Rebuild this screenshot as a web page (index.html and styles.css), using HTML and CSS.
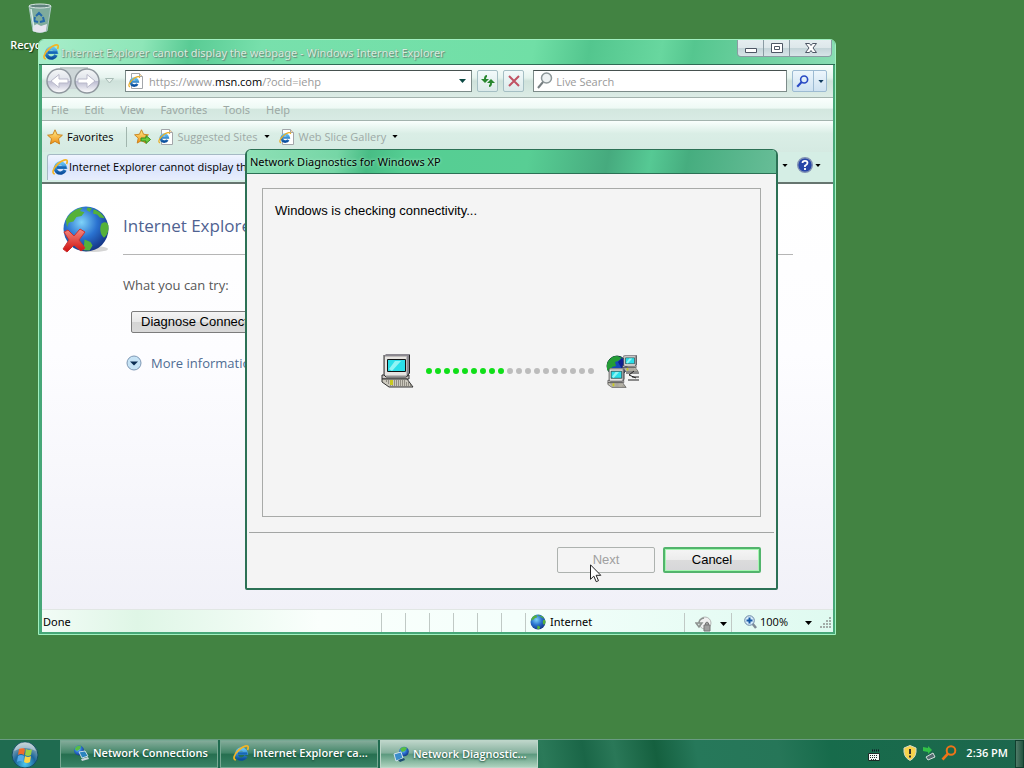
FILE: index.html
```html
<!DOCTYPE html>
<html lang="en">
<head>
    <meta charset="UTF-8">
    <meta name="viewport" content="width=device-width, initial-scale=1.0">
    <title>Network Diagnostics for Windows XP</title>
    <link rel="stylesheet" href="styles.css">
</head>
<body>
    <!-- shared icons -->
    <svg class="sprite" aria-hidden="true">
        <defs>
            <linearGradient id="ieBlue" x1="0" y1="0" x2="0" y2="1">
                <stop offset="0" stop-color="#62c0f4"/>
                <stop offset="1" stop-color="#0b4f9e"/>
            </linearGradient>
            <linearGradient id="gold" x1="0" y1="0" x2="0" y2="1">
                <stop offset="0" stop-color="#fff08a"/>
                <stop offset="1" stop-color="#f08c12"/>
            </linearGradient>
            <radialGradient id="sea" cx=".4" cy=".35" r=".7">
                <stop offset="0" stop-color="#7fd3f8"/>
                <stop offset=".5" stop-color="#2a72d0"/>
                <stop offset="1" stop-color="#12307f"/>
            </radialGradient>
            <linearGradient id="redX" x1="0" y1="0" x2="0" y2="1">
                <stop offset="0" stop-color="#f58a80"/>
                <stop offset="1" stop-color="#d00f0f"/>
            </linearGradient>
            <linearGradient id="silver" x1="0" y1="0" x2="0" y2="1">
                <stop offset="0" stop-color="#f4f6f7"/>
                <stop offset=".48" stop-color="#dfe3ea"/>
                <stop offset=".5" stop-color="#b9b9cf"/>
                <stop offset="1" stop-color="#ffffff"/>
            </linearGradient>
            <radialGradient id="orb" cx=".5" cy=".85" r=".8">
                <stop offset="0" stop-color="#4cc8ee"/>
                <stop offset=".5" stop-color="#1c669c"/>
                <stop offset="1" stop-color="#9cb4bb"/>
            </radialGradient>
        </defs>
        <symbol id="ie" viewBox="0 0 16 16">
            <path d="M13 11A5 5 0 1 1 13.300 8.300H5" fill="none" stroke="url(#ieBlue)" stroke-width="3.400"/>
            <path d="M5 8.500h9" stroke="#1767b5" stroke-width="2.200"/>
            <path d="M2.800 14.800C-.8 14.500 1.500 8.800 5.800 5 10 1.200 15.400-.8 15.200 2.600c0 .8-.3 1.600-.7 2.400" fill="none" stroke="#f3b526" stroke-width="1.700"/>
        </symbol>
        <symbol id="iePage" viewBox="0 0 16 16">
            <path d="M3.500.5h8l3 3v12h-11z" fill="#fff" stroke="#a3a6aa"/>
            <path d="M11.500.5v3h3" fill="#f7d9a8" stroke="#a3a6aa"/>
            <path d="M9.300 10.800A3.500 3.500 0 1 1 9.700 8.500H4" fill="none" stroke="url(#ieBlue)" stroke-width="2.600"/>
            <path d="M2 13.800C-.8 13 2 8.500 5.500 5.800 8.500 3.400 12 2.800 11.500 5" fill="none" stroke="#e9ad25" stroke-width="1.200"/>
        </symbol>
        <symbol id="star" viewBox="0 0 16 16">
            <path d="M8 .8l2.200 4.800 5.200.6-3.900 3.500 1.100 5.300L8 12.400 3.400 15l1.100-5.300L.6 6.200l5.200-.6z" fill="url(#gold)" stroke="#c77d14" stroke-width=".9"/>
        </symbol>
        <symbol id="globe" viewBox="0 0 16 16">
            <circle cx="8" cy="8" r="7.500" fill="url(#sea)"/>
            <path d="M1.300 5C2.500 2.500 5 1 7 .8L6 2l1.500.4-1 1.300-1.700.3-1 1.500-1.500.3-.6 1.500zM8.500.8l1.500.3-.8 1.200-1-.6zM10.500 1.400c2 .6 3.200 1.900 3.700 3l-1.600-.2-.9-1-1.300-.3zM13.200 6.200c1.200-.8 2-.4 2.300.7.100 2-.5 3.200-1.500 4-1.300-1-1.600-3.200-.8-4.700zM7.500 11.500l2 .8.700 1.200-1 1.700-2-.1z" fill="#55b13a"/>
        </symbol>
        <symbol id="caret" viewBox="0 0 7 4">
            <path d="M0 0h7L3.500 4z" fill="currentColor"/>
        </symbol>
        <symbol id="lens" viewBox="0 0 16 16">
            <circle cx="10" cy="5.500" r="4.300" fill="none" stroke="currentColor" stroke-width="2"/>
            <path d="M7 8.700L1.500 14.500" stroke="currentColor" stroke-width="2.600"/>
        </symbol>
        <symbol id="screen" viewBox="0 0 33 34">
            <path d="M3 2l2-2h24v19l-3 3H3z" fill="#8b8890"/>
            <path d="M28.500 1v18l-2.500 3" fill="none" stroke="#222"/>
            <path d="M3.500 2.500h22v19h-22z" fill="#e6e4e1" stroke="#bdbab9"/>
            <path d="M3 1v21" stroke="#333"/>
            <path d="M6.500 5.500h18v12h-18z" fill="#2adfe9" stroke="#111"/>
            <path d="M8 15l6-8h6l-9 10z" fill="#90f5f5"/>
            <path d="M1 21h2l2 2h20l3-2v4H1z" fill="#c9c6c4" stroke="#333"/>
            <path d="M1 25h25l6 8H8l-7-5z" fill="#cbc8bd" stroke="#333"/>
            <path d="M5 27h20M7 29h21M9 31h21" stroke="#56534a" stroke-dasharray="1 1"/>
            <path d="M9 26h3v5H9z" fill="#c9c920"/>
        </symbol>
        <symbol id="net" viewBox="0 0 16 16">
            <circle cx="6" cy="5.500" r="5" fill="url(#sea)"/>
            <path d="M1.500 4Q4-.5 8 1L7 4 4 6z" fill="#57bd42"/>
            <path d="M6 7l6-1 3 5-6 2z" fill="#2b83be" stroke="#c6dce8"/>
            <path d="M8 14l7-2 1 2-7 2z" fill="#cbd5dc"/>
        </symbol>
        <symbol id="diag" viewBox="0 0 16 16">
            <circle cx="11" cy="5.500" r="4.800" fill="url(#sea)"/>
            <path d="M7 3Q10-.5 14 2l-2 3-3 1z" fill="#57bd42"/>
            <path d="M1 8l7-2 2 6-7 3z" fill="#3c8dcb" stroke="#d2e4ef"/>
            <path d="M5 14l6-2 1 2-5 2z" fill="#1d4e74"/>
        </symbol>
    </svg>

    <main class="desktop">
        <div class="shortcut">
            <svg width="28" height="32" viewBox="0 0 28 32" aria-hidden="true">
                <path d="M3 4h22l-4 25q-7 3-14 0z" fill="#8fb5b3" fill-opacity=".8" stroke="#a9c6c2"/>
                <ellipse cx="14" cy="4" rx="11" ry="2" fill="#60837e" stroke="#dce9e6"/>
                <path d="M7 24l4-2 4 2 6-2-1 7q-6 3-13 0z" fill="#e6e4ee"/>
                <path d="M10 14l3-3 3 3M17 15l1 4-4 1M9 15l-1 4 4 1" fill="none" stroke="#2468aa" stroke-width="2"/>
                <path d="M5 7l3 19" stroke="#d9ece8" stroke-width="1.500"/>
            </svg>
            <span>Recycle Bin</span>
        </div>

        <section class="window browser">
            <header class="titlebar">
                <svg class="icon"><use href="#ie"/></svg>
                <h1 class="title">Internet Explorer cannot display the webpage - Windows Internet Explorer</h1>
                <div class="caption-buttons">
                    <button type="button" aria-label="Minimize">
                        <svg width="14" height="12" viewBox="0 0 14 12"><path d="M1.500 6.500h11v4h-11z" fill="#fff" stroke="#4d5664"/></svg>
                    </button>
                    <button type="button" aria-label="Maximize">
                        <svg width="14" height="12" viewBox="0 0 14 12"><path d="M1.500 1.500h11v9h-11zM4.500 4.500h5v3h-5z" fill="#fff" stroke="#4d5664"/></svg>
                    </button>
                    <button type="button" class="close" aria-label="Close">
                        <svg width="14" height="12" viewBox="0 0 14 12"><path d="M1.500 1.500h4L7 3.500l1.500-2h4L9 6l3.500 4.500h-4L7 8.500l-1.500 2h-4L5 6z" fill="#fff" stroke="#4d5664"/></svg>
                    </button>
                </div>
            </header>

            <div class="address-row">
                <button type="button" class="plain" aria-label="Back and forward">
                    <svg width="64" height="28" viewBox="0 0 64 28">
                        <path d="M14 2h28v20H14z" fill="#cdd6d8"/>
                        <path d="M14 1h28" stroke="#91a09f"/>
                        <circle cx="13" cy="14" r="12" fill="url(#silver)" stroke="#8f979e" stroke-width="1.500"/>
                        <circle cx="41" cy="14" r="12" fill="url(#silver)" stroke="#8f979e" stroke-width="1.500"/>
                        <path d="M5 14l8-6.500V12h9v4h-9v4.500z" fill="#fff" stroke="#b9b9ca"/>
                        <path d="M49 14l-8-6.500V12h-9v4h9v4.500z" fill="#fff" stroke="#b9b9ca"/>
                    </svg>
                </button>
                <svg class="history" width="9" height="6" viewBox="0 0 9 6"><path d="M.5.5h8l-4 4.500z" fill="#e8f2ee" stroke="#a8bcb6"/></svg>
                <div class="field address">
                    <svg class="icon"><use href="#iePage"/></svg>
                    <a href="#">https://www.<b>msn.com</b>/?ocid=iehp</a>
                    <svg class="caret teal"><use href="#caret"/></svg>
                </div>
                <button type="button" class="tool" aria-label="Refresh">
                    <svg width="16" height="16" viewBox="0 0 16 16"><path d="M7 2Q4 2 4 6H1l4 4 4-4H6Q6 4 7 4zM9 14q3 0 3-4h3l-4-4-4 4h3q0 2-1 2z" fill="#28872f"/></svg>
                </button>
                <button type="button" class="tool" aria-label="Stop">
                    <svg width="16" height="16" viewBox="0 0 16 16"><path d="M3 3l10 10M13 3L3 13" stroke="#c05364" stroke-width="2"/></svg>
                </button>
                <label class="field search">
                    <svg width="16" height="18" viewBox="0 0 16 18"><circle cx="9.500" cy="6" r="5" fill="#eef2f3" stroke="#8d9799" stroke-width="1.500"/><path d="M6 10l-5 6" stroke="#777f82" stroke-width="2"/></svg>
                    <input type="text" placeholder="Live Search" aria-label="Live Search">
                </label>
                <button type="button" class="tool search-go" aria-label="Search">
                    <svg class="blue" width="13" height="13"><use href="#lens"/></svg>
                    <i></i>
                    <svg class="caret small"><use href="#caret"/></svg>
                </button>
            </div>

            <nav class="menu-row">
                <button type="button">File</button>
                <button type="button">Edit</button>
                <button type="button">View</button>
                <button type="button">Favorites</button>
                <button type="button">Tools</button>
                <button type="button">Help</button>
            </nav>

            <div class="favorites-row">
                <button type="button" class="plain fav"><svg class="icon"><use href="#star"/></svg>Favorites</button>
                <i class="divider"></i>
                <button type="button" class="plain" aria-label="Add to Favorites Bar">
                    <svg width="17" height="16" viewBox="0 0 17 16"><use href="#star" width="15" height="15"/><path d="M7 9h5V6.500l4.500 4-4.500 4V12H7z" fill="#6cce3d" stroke="#368d20"/></svg>
                </button>
                <button type="button" class="plain dim"><svg class="icon"><use href="#iePage"/></svg>Suggested Sites<svg class="caret small"><use href="#caret"/></svg></button>
                <button type="button" class="plain dim"><svg class="icon"><use href="#iePage"/></svg>Web Slice Gallery<svg class="caret small"><use href="#caret"/></svg></button>
            </div>

            <div class="tab-row">
                <button type="button" class="tab"><svg class="icon"><use href="#ie"/></svg>Internet Explorer cannot display the webpage</button>
                <div class="commands">
                    <svg class="caret small"><use href="#caret"/></svg>
                    <button type="button" class="plain" aria-label="Help">
                        <svg width="16" height="16" viewBox="0 0 16 16"><circle cx="8" cy="8" r="7.300" fill="#2746a8" stroke="#8393b5" stroke-width="1.400"/><path d="M5.500 6Q5.500 3.800 8 3.800T10.500 6Q10.500 7.300 8 8.800V10M8 11v2" fill="none" stroke="#fff" stroke-width="1.800"/></svg>
                        <svg class="caret small"><use href="#caret"/></svg>
                    </button>
                </div>
            </div>

            <article class="page">
                <svg class="error-globe" width="48" height="48" viewBox="0 0 48 48" aria-hidden="true">
                    <ellipse cx="32" cy="44" rx="14" ry="3" fill="#d5d5d5"/>
                    <use href="#globe" width="48" height="48"/>
                    <path d="M2 27l4-2 6 6 6-7 5 3-6 8 6 8-4 3-7-6-7 7-4-3 6-9z" fill="url(#redX)" stroke="#c93333"/>
                </svg>
                <div class="page-text">
                    <h2>Internet Explorer cannot display the webpage</h2>
                    <p>What you can try:</p>
                    <button type="button" class="diagnose">Diagnose Connection Problems</button>
                    <a class="more" href="#">
                        <svg width="16" height="16" viewBox="0 0 16 16"><circle cx="8" cy="8" r="7" fill="#c6e3f5" stroke="#7e98b4"/><path d="M4 6.500h8L8 10.500z" fill="#0a2c52"/></svg>
                        More information
                    </a>
                </div>
            </article>

            <footer class="statusbar">
                <span class="done">Done</span>
                <i></i><i></i><i></i><i></i><i></i><i></i>
                <span class="zone"><svg class="icon"><use href="#globe"/></svg>Internet</span>
                <span class="lock">
                    <svg width="17" height="16" viewBox="0 0 17 16"><circle cx="10" cy="7" r="6" fill="#f0f0f0" stroke="#b4b8b6"/><path d="M1 7h6L4 11zM4 7q0-4 5-5" fill="none" stroke="#8d9290" stroke-width="1.500"/><path d="M9 9h6v6H9zM10.500 9V7q1.500-2 3 0v2" fill="#a0a0a0" stroke="#777"/></svg>
                    <svg class="caret"><use href="#caret"/></svg>
                </span>
                <span class="zoom">
                    <svg width="13" height="14" viewBox="0 0 13 14"><path d="M8 8l4 5" stroke="#7e8b96" stroke-width="2.500"/><circle cx="5.500" cy="5.500" r="4.800" fill="#d7ecfa" stroke="#6a86a5"/><path d="M5.500 2.500v6M2.500 5.500h6" stroke="#1658a5" stroke-width="2"/></svg>
                    100%
                    <svg class="caret"><use href="#caret"/></svg>
                </span>
                <svg class="grip" width="12" height="12" viewBox="0 0 12 12"><path d="M9 1h2M6 4h2m1 0h2M3 7h2m1 0h2m1 0h2M0 10h2m1 0h2m1 0h2m1 0h2" stroke="#a3aca8" stroke-width="2"/></svg>
            </footer>
        </section>

        <section class="window dialog" role="dialog" aria-labelledby="dialogTitle">
            <header class="titlebar">
                <h1 class="title" id="dialogTitle">Network Diagnostics for Windows XP</h1>
            </header>
            <div class="dialog-body">
                <div class="panel">
                    <p>Windows is checking connectivity...</p>
                    <div class="progress">
                        <svg width="33" height="34" aria-hidden="true"><use href="#screen"/></svg>
                        <svg class="dots" width="168" height="6" viewBox="0 0 168 6" aria-hidden="true">
                            <path d="M3 3h73" stroke="#0fdf18"/>
                            <path d="M84 3h82" stroke="#bcbcbc"/>
                        </svg>
                        <svg width="33" height="34" viewBox="0 0 33 34" aria-hidden="true">
                            <circle cx="11" cy="12" r="10" fill="#1747bb" stroke="#163f35"/>
                            <path d="M1 10Q4 2 11 2l5 2-4 3-3 1 1 4-4 1-1 5-4-2z" fill="#249d36"/>
                            <path d="M12 8l4-4 3 5-3 6z" fill="#101f8e"/>
                            <use href="#screen" x="16" y="1" width="17" height="17"/>
                            <use href="#screen" x="1" y="14" width="20" height="20"/>
                            <path d="M20 19h13M26 23h7M22 26h11M28 17l-5 4 7 3" fill="none" stroke="#222"/>
                        </svg>
                    </div>
                </div>
                <div class="actions">
                    <button type="button" disabled>Next</button>
                    <button type="button" class="default">Cancel</button>
                </div>
            </div>
        </section>

        <svg class="cursor" width="12" height="19" viewBox="0 0 12 19" aria-hidden="true"><path d="M.5.8v14.500l3.300-3.200 2.400 5.600 2.300-1-2.400-5.400h4.700z" fill="#fff" stroke="#222"/></svg>
    </main>

    <footer class="taskbar">
        <button type="button" class="start" aria-label="Start">
            <svg width="28" height="28" viewBox="0 0 28 28">
                <circle cx="14" cy="15" r="13" fill="url(#orb)" stroke="#154f60"/>
                <path d="M8 9q3-2 6 0l-1 6q-3-2-6 0z" fill="#ee6c2c"/>
                <path d="M15 9q3 2 6 0l-1 6q-3 2-6 0z" fill="#9bcf43"/>
                <path d="M7 16q3-2 6 0l-1 6q-3-2-6 0z" fill="#55aae9"/>
                <path d="M14 16q3 2 6 0l-1 6q-3 2-6 0z" fill="#fbd448"/>
                <path d="M3 11q3-9 11-9t11 9q-11-6-22 0z" fill="#fff" fill-opacity=".4"/>
            </svg>
        </button>
        <button type="button" class="task"><svg class="icon"><use href="#net"/></svg>Network Connections</button>
        <button type="button" class="task"><svg class="icon"><use href="#ie"/></svg>Internet Explorer ca...</button>
        <button type="button" class="task active"><svg class="icon"><use href="#diag"/></svg>Network Diagnostic...</button>
        <div class="tray">
            <svg class="keyboard" width="12" height="12" viewBox="0 0 12 12"><path d="M4 1.500h7" stroke="#112" stroke-width="2" stroke-dasharray="1 1"/><path d="M.5 4.500h11v7H.5z" fill="#f4f7f5" stroke="#1c2b26"/><path d="M2 6.500h8M2 8.500h8M3 10.500h6" stroke="#1c2b26" stroke-dasharray="1 1"/></svg>
            <svg width="14" height="16" viewBox="0 0 14 16"><path d="M7 .5l6 2.500q1 9-6 12.500Q0 12 1 3z" fill="#f7d34c" stroke="#d9dcc6"/><path d="M7 4v5M7 10.500v2" stroke="#333" stroke-width="2"/></svg>
            <svg width="14" height="16" viewBox="0 0 14 16"><path d="M1 2l5 1V1l4 4-4 4V7L1 6z" fill="#32c148"/><path d="M4 12l7-4 2 4-7 3z" fill="#546b70" stroke="#d5dfdd"/></svg>
            <svg class="orange" width="16" height="16"><use href="#lens"/></svg>
            <time>2:36 PM</time>
        </div>
        <button type="button" class="show-desktop" aria-label="Show desktop"></button>
    </footer>
</body>
</html>
```

FILE: styles.css
```css
* {
    box-sizing: border-box;
}
body {
    margin: 0;
    height: 100vh;
    display: flex;
    flex-direction: column;
    overflow: hidden;
    background: #428342;
    color: #000;
    font: 11px/16px "Open Sans", "Noto Sans", sans-serif;
}
button, input {
    font: inherit;
    color: inherit;
    margin: 0;
}
h1, h2, p {
    margin: 0;
    font-weight: normal;
}
svg {
    flex: none;
    display: block;
}
.sprite {
    position: absolute;
    width: 0;
    height: 0;
}
.icon {
    width: 16px;
    height: 16px;
}
.caret {
    width: 7px;
    height: 4px;
}
.caret.small {
    width: 6px;
    height: 3px;
}
.teal {
    color: #0c4944;
}
.blue {
    color: #2949c4;
}
.orange {
    color: #ef7418;
}
.plain {
    display: flex;
    align-items: center;
    padding: 0;
    border: 0;
    background: none;
}

/* desktop */
.desktop {
    position: relative;
    flex: 1;
}
.shortcut {
    width: 80px;
    padding-top: 2px;
    display: flex;
    flex-direction: column;
    align-items: center;
    gap: 3px;
    color: #fff;
    font-weight: 600;
    text-shadow: 1px 1px 1px #143814;
}
.window {
    position: absolute;
    display: flex;
    flex-direction: column;
}
.titlebar {
    display: flex;
    align-items: center;
}
.title {
    flex: 1;
    font: 11px/16px "Noto Sans", sans-serif;
    white-space: nowrap;
}

/* browser */
.browser {
    inset: 39px 188px 104px 38px;
    padding: 0 2px 2px 3px;
    border: 1px solid #a0f0bf;
    border-radius: 6px 6px 0 0;
    background: #47a778;
}
.browser .titlebar {
    height: 25px;
    margin: 0 -2px 0 -3px;
    padding: 0 3px 0 4px;
    gap: 2px;
    border-bottom: 1px solid #2e6b54;
    border-radius: 5px 5px 0 0;
    background: linear-gradient(100deg, #a8edca 0, #8ee6b8 13%, #59cb94 19%, #78e0ac 28%, #70dfa6 62%, #53c68e 69%, #68d79f 78%, #55c68f 82%, #89ddb3 100%);
}
.browser .title {
    padding-top: 2px;
    color: #d5efdf;
    text-shadow: 1px 1px 1px #69877a, 0 0 1px #789687;
}
.caption-buttons {
    display: flex;
    align-self: flex-start;
    height: 17px;
    border: 1px solid #8a9ca3;
    border-top: 0;
    border-radius: 0 0 4px 4px;
    overflow: hidden;
}
.caption-buttons button {
    width: 26px;
    padding: 2px 0 0;
    display: flex;
    justify-content: center;
    border: 0;
    border-right: 1px solid #8a9ca3;
    background: linear-gradient(#e5eef0 0, #dde7ea 50%, #c3d4d8 50%, #d8e5e8);
}
.caption-buttons .close {
    width: 41px;
    border-right: 0;
}
.address-row {
    height: 33px;
    padding: 0 6px 0 4px;
    display: flex;
    align-items: center;
    gap: 5px;
    border-bottom: 1px solid #a3b3ae;
    background: linear-gradient(#fafffd 0, #e5f3ee 40%, #cfe2db 50%, #dcece6 100%);
}
.address-row .history {
    margin: 0 6px 0 -10px;
}
.field {
    height: 22px;
    display: flex;
    align-items: center;
    border: 1px solid #7d8c8a;
    border-top-color: #46514f;
    background: #fff;
}
.address {
    flex: 347;
    padding: 0 5px 0 2px;
    gap: 5px;
}
.address a {
    flex: 1;
    padding-top: 2px;
    color: #999;
    text-decoration: none;
}
.address b {
    color: #000;
    font-weight: normal;
}
.search {
    flex: 255;
    margin-left: 4px;
    padding-left: 3px;
    gap: 3px;
}
.search input {
    flex: 1;
    min-width: 0;
    padding: 2px 0 0;
    border: 0;
    outline: 0;
    background: none;
}
.search input::placeholder {
    color: #999;
}
.tool {
    height: 22px;
    width: 21px;
    padding: 0;
    display: flex;
    align-items: center;
    justify-content: center;
    border: 1px solid #a5bfc4;
    border-radius: 2px;
    background: linear-gradient(#f2fafa, #dbeaea);
}
.search-go {
    width: 35px;
    gap: 4px;
    border-color: #9dbbd2;
    background: linear-gradient(#edf6fc, #cfe2f1);
    color: #123c5e;
}
.search-go i {
    align-self: stretch;
    border-left: 1px solid #9dbbd2;
}
.menu-row {
    height: 23px;
    padding-left: 9px;
    display: flex;
    align-items: center;
    gap: 16px;
    border-bottom: 1px solid #a3b3ae;
    background: linear-gradient(#fafffd 0, #eefaf5 45%, #d3e7df 52%, #d8ebe4 100%);
}
.menu-row button {
    padding: 2px 0 0;
    border: 0;
    background: none;
    color: #9da9a5;
    font-family: "Noto Sans", sans-serif;
}
.favorites-row {
    height: 31px;
    padding: 0 5px;
    display: flex;
    align-items: center;
    gap: 7px;
    background: linear-gradient(#fafffd 0, #daeee6 40%, #d5eae2 100%);
}
.fav {
    gap: 4px;
    margin-right: 5px;
}
.divider {
    height: 20px;
    border-left: 1px solid #a1b6ae;
}
.dim {
    gap: 4px;
    margin-right: 2px;
    color: #9da9a5;
}
.dim .caret {
    margin-left: 2px;
    color: #000;
}
.tab-row {
    height: 32px;
    padding: 2px 12px 2px 5px;
    display: flex;
    justify-content: space-between;
    border-bottom: 2px solid #66756f;
    background: #d5eee5;
}
.tab {
    padding: 0 12px 2px 4px;
    display: flex;
    align-items: center;
    gap: 1px;
    border: 1px solid #a5b9c4;
    border-bottom: 0;
    border-radius: 3px 3px 0 0;
    background: linear-gradient(#f0f5ff, #d9e3fc 50%, #e8eefd);
}
.commands, .commands button {
    display: flex;
    align-items: center;
    gap: 2px;
}
.commands {
    gap: 9px;
    padding-bottom: 4px;
}
.page {
    flex: 1;
    min-height: 0;
    padding: 21px 40px 0 20px;
    display: flex;
    gap: 13px;
    background: linear-gradient(#fff 0, #fdfdff 40%, #f1f1f8 100%);
    font-size: 13px;
    line-height: 20px;
    color: #575757;
}
.page-text {
    flex: 1;
    min-width: 0;
    display: flex;
    flex-direction: column;
    align-items: flex-start;
}
.page h2 {
    align-self: stretch;
    height: 50px;
    padding-top: 9px;
    border-bottom: 1px solid #b5b5b5;
    color: #4f6291;
    font-size: 17px;
    line-height: 24px;
}
.page p {
    margin-top: 20px;
}
.diagnose {
    height: 22px;
    margin: 16px 8px 0;
    padding: 0 9px;
    border: 1px solid #7c7c7c;
    border-radius: 2px;
    background: linear-gradient(#f4f4f4, #e7e7e7 50%, #d4d4d4 50%, #d9d9d9);
    color: #000;
    font: 13px/20px "Liberation Sans", Arial, sans-serif;
}
.more {
    margin: 20px 3px 0;
    display: flex;
    align-items: center;
    gap: 9px;
    color: #4f6c93;
    text-decoration: none;
}
.statusbar {
    height: 23px;
    padding-top: 2px;
    display: flex;
    align-items: center;
    background: linear-gradient(90deg, #f2fcf6, #dff6e6 12%, #fafffc 35%, #f4fffb 60%, #dffaf0);
    border-top: 1px solid #e1e7e4;
}
.statusbar i, .zone, .lock, .zoom {
    height: 19px;
    border-left: 1px solid #c0c9c5;
}
.statusbar i {
    width: 24px;
}
.done {
    flex: 1;
    padding-left: 1px;
    font-family: "Noto Sans", sans-serif;
}
.zone, .lock, .zoom {
    display: flex;
    align-items: center;
}
.zone {
    width: 159px;
    padding-left: 4px;
    gap: 4px;
    font-family: "Noto Sans", sans-serif;
}
.lock {
    width: 47px;
    padding: 3px 0 0 10px;
    gap: 8px;
}
.zoom {
    padding-left: 12px;
    gap: 3px;
}
.zoom .caret {
    margin: 2px 8px 0 14px;
}
.grip {
    margin: 2px 1px 0 0;
}

/* dialog */
.dialog {
    inset: 149px 246px 149px;
    margin-left: -1px;
    border: 2px solid #2c7155;
    border-top-width: 1px;
    border-radius: 6px 6px 2px 2px;
    background: #f4f4f4;
}
.dialog .titlebar {
    height: 24px;
    padding-left: 3px;
    border-bottom: 1px solid #2c7155;
    border-radius: 4px 4px 0 0;
    background: linear-gradient(100deg, #8ee0b6 0, #76d6a6 17%, #48bd85 23%, #55ce93 30%, #58ce94 53%, #46aa7e 68%, #56c994 76%, #46ad7f 83%, #67bd97 100%);
}
.dialog .title {
    text-shadow: 0 0 3px #c2f3d9;
}
.dialog-body {
    flex: 1;
    display: flex;
    flex-direction: column;
    padding: 14px 2px 0;
    font: 13px/16px "Liberation Sans", Arial, sans-serif;
}
.panel {
    flex: 1;
    margin: 0 13px 15px;
    padding: 14px 12px 0;
    display: flex;
    flex-direction: column;
    border: 1px solid #a8aaa8;
}
.progress {
    flex: 1;
    display: flex;
    align-items: center;
    justify-content: center;
    gap: 12px;
    padding: 6px 4px 0 0;
}
.dots path {
    stroke-width: 6px;
    stroke-linecap: round;
    stroke-dasharray: 0 9;
}
.actions {
    display: flex;
    justify-content: flex-end;
    gap: 8px;
    padding: 14px 13px 15px;
    border-top: 1px solid #a3a5a4;
}
.actions button {
    width: 98px;
    height: 26px;
    padding: 0;
    border: 1px solid #8b918e;
    border-radius: 2px;
    background: linear-gradient(#f5f5f5, #ececec 50%, #dcdcdc 50%, #d6d6d9);
}
.actions button:disabled {
    border-color: #adb2af;
    background: #f4f4f4;
    color: #a0a0a0;
}
.actions .default {
    border: 2px solid #52b46c;
    box-shadow: inset 0 0 0 1px #a4f6b0;
}
.cursor {
    position: absolute;
    left: 590px;
    top: 564px;
}

/* taskbar */
.taskbar {
    height: 29px;
    display: flex;
    gap: 2px;
    border-top: 1px solid #699b82;
    background: linear-gradient(80deg, #1f6b50 0, #1f6b50 50%, #2b7a59 53%, #1a6647 57%, #2a7858 60%, #15603f 64%, #26785a 68%, #267658 76%, #176b4b 81%, #1d674d 100%);
    color: #fff;
}
.start {
    width: 58px;
    padding: 0 0 0 11px;
    border: 0;
    background: none;
}
.task {
    width: 158px;
    height: 28px;
    padding: 0 12px 2px;
    display: flex;
    align-items: center;
    gap: 4px;
    border: 1px solid #78a994;
    background: linear-gradient(#83ab99 0, #438669 45%, #266f50 52%, #398366 100%);
    font-weight: 600;
    text-shadow: 0 1px 2px #164432;
    white-space: nowrap;
}
.task.active {
    padding: 0 12px;
    border-color: #bdd6c9;
    background: linear-gradient(#bdd5c9 0, #86b19e 45%, #5d9a7f 52%, #acd2bd 100%);
}
.tray {
    flex: 1;
    padding-bottom: 2px;
    display: flex;
    align-items: center;
    justify-content: flex-end;
    gap: 5px;
    font-weight: 600;
}
.keyboard {
    margin: 4px 18px 0 0;
}
.tray time {
    margin: 0 5px 0 4px;
}
.show-desktop {
    width: 9px;
    padding: 0;
    border: 1px solid #113f2e;
    background: linear-gradient(90deg, #507b68, #23533f);
}
```
